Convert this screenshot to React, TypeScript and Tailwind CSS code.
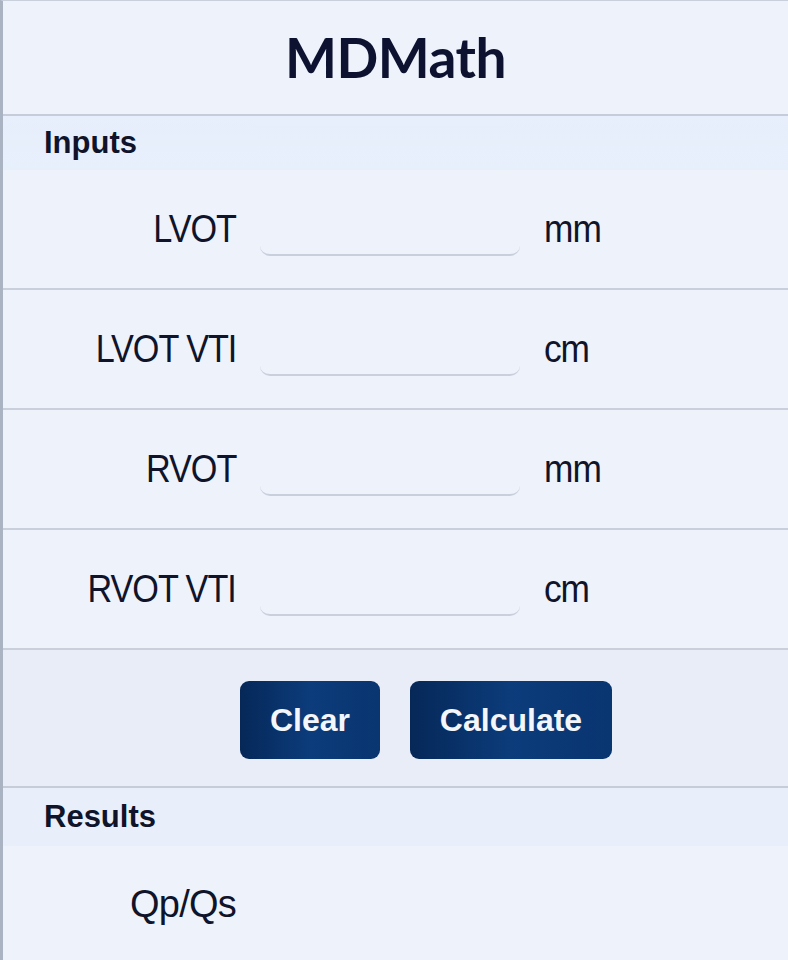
import { useState } from "react";

const rows = [
  { label: "LVOT", unit: "mm" },
  { label: "LVOT VTI", unit: "cm" },
  { label: "RVOT", unit: "mm" },
  { label: "RVOT VTI", unit: "cm" },
];

export default function App() {
  const [values, setValues] = useState<string[]>(["", "", "", ""]);

  return (
    <div
      className="min-h-[960px] w-[788px] overflow-hidden border-l-[3px] border-t border-l-[#a9b3c2] border-t-[#c9d0db] bg-[#eef2fb] text-[#10142a]"
      style={{ fontFamily: '"Liberation Sans", Arial, sans-serif' }}
    >
      <header className="flex h-[115px] items-center justify-center border-b-2 border-[#c6ccda]">
        <h1
          className="text-[55px] font-bold leading-none tracking-[-0.01em] text-[#0d1231]"
          style={{ fontFamily: "Lato, sans-serif" }}
        >
          MDMath
        </h1>
      </header>

      <div className="flex h-[54px] items-center bg-linear-to-b from-[#e8eefb] to-[#e6f0fb] pl-[41px]">
        <h2 className="text-[31px] font-bold">Inputs</h2>
      </div>

      {rows.map((row, i) => (
        <div
          key={row.label}
          className="grid h-[120px] grid-cols-[233px_260px_1fr] items-center gap-x-6 border-b-2 border-[#c9cfdb]"
        >
          <span className="text-right">
            <span className="inline-block origin-right scale-x-[0.9] text-[38px] tracking-[-0.03em]">{row.label}</span>
          </span>
          <input
            value={values[i]}
            onChange={(e) => setValues(values.map((v, j) => (j === i ? e.target.value : v)))}
            className="h-[54px] rounded-[10px] border-b-2 border-[#c9cfdc] bg-transparent px-3 text-[32px] outline-none"
          />
          <span>
            <span className="inline-block origin-left scale-x-[0.93] text-[38px] tracking-[-0.03em]">{row.unit}</span>
          </span>
        </div>
      ))}

      <div className="flex h-[138px] items-center gap-[30px] border-b-2 border-[#c6ccd8] bg-[#e8edf7] pl-[237px] pt-[3px]">
        <button
          onClick={() => setValues(["", "", "", ""])}
          className="h-[78px] w-[140px] rounded-[9px] bg-linear-to-r from-[#062858] via-[#0c3c7b] to-[#093570] text-[32px] font-bold text-[#f3f6fb]"
        >
          Clear
        </button>
        <button className="h-[78px] w-[202px] rounded-[9px] bg-linear-to-r from-[#062858] via-[#0c3c7b] to-[#093570] text-[32px] font-bold text-[#f3f6fb]">
          Calculate
        </button>
      </div>

      <div className="flex h-[58px] items-center bg-[#e9effa] pl-[41px]">
        <h2 className="text-[31px] font-bold">Results</h2>
      </div>

      <div className="grid h-[116px] grid-cols-[233px_1fr] items-center">
        <span className="text-right text-[38px] tracking-[-0.02em]">Qp/Qs</span>
      </div>
    </div>
  );
}
